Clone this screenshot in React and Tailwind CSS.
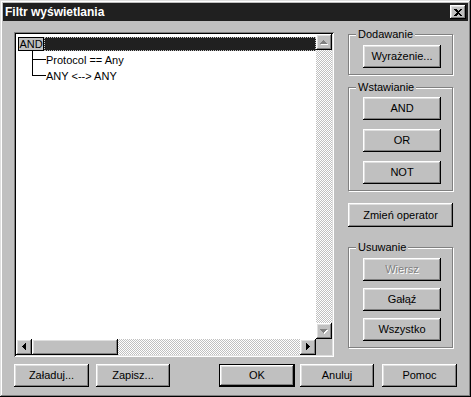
const raised =
  "bg-[#c0c0c0] shadow-[inset_-1px_-1px_#000000,inset_1px_1px_#ffffff,inset_-2px_-2px_#808080,inset_2px_2px_#dfdfdf]";

const dither =
  "bg-[image:repeating-conic-gradient(#c0c0c0_0%_25%,#ffffff_0%_50%)] bg-size-[2px_2px]";

function Button({ children, className = "", disabled = false, isDefault = false }) {
  if (isDefault) {
    return (
      <div className={`border border-black flex ${className}`}>
        <button type="button" className={`${raised} flex-1 flex items-center justify-center leading-none`}>
          {children}
        </button>
      </div>
    );
  }
  return (
    <button
      type="button"
      className={`${raised} flex items-center justify-center leading-none ${
        disabled ? "text-[#808080] [text-shadow:1px_1px_0_#ffffff]" : ""
      } ${className}`}
    >
      {children}
    </button>
  );
}

function Group({ label, className = "", children }) {
  return (
    <div
      className={`relative border border-[#808080] shadow-[1px_1px_0_#ffffff,inset_1px_1px_0_#ffffff] ${className}`}
    >
      <span className="absolute -top-[7px] left-[7px] px-[2px] bg-[#c0c0c0] leading-[13px]">
        {label}
      </span>
      {children}
    </div>
  );
}

function Arrow({ dir, disabled }) {
  const shapes = {
    up: "M3.5 0 L7 4 L0 4 Z",
    down: "M0 0 L7 0 L3.5 4 Z",
    left: "M4 0 L4 7 L0 3.5 Z",
    right: "M0 0 L4 3.5 L0 7 Z",
  };
  const vertical = dir === "up" || dir === "down";
  const w = vertical ? 7 : 4;
  const h = vertical ? 4 : 7;
  return (
    <div className={`${raised} w-[16px] h-[16px] flex items-center justify-center shrink-0`}>
      <svg width={w + 1} height={h + 1} viewBox={`0 0 ${w + 1} ${h + 1}`} shapeRendering="crispEdges">
        {disabled && <path d={shapes[dir]} fill="#ffffff" transform="translate(1 1)" />}
        <path d={shapes[dir]} fill={disabled ? "#808080" : "#000000"} />
      </svg>
    </div>
  );
}

function TreeBox() {
  const children = ["Protocol == Any", "ANY <--> ANY"];
  return (
    <div className="w-[320px] h-[325px] p-[2px] flex shadow-[inset_1px_1px_#808080,inset_-1px_-1px_#ffffff,inset_2px_2px_#000000,inset_-2px_-2px_#dfdfdf]">
      <div className="flex-1 flex flex-col bg-white">
        <div className="flex-1 flex">
          <div className="flex-1 pt-[3px] pl-[2px]">
            <div className="flex h-[14px]">
              <span className="w-[26px] h-[14px] border border-black bg-[#c0c0c0] flex items-center justify-center leading-none">
                AND
              </span>
              <span className="flex-1 bg-[#202020] border border-dotted border-[#c0c0c0]" />
            </div>
            <div className="pl-[14px]">
              {children.map((text, i) => (
                <div key={text} className="flex h-[16px]">
                  <div className="w-[14px] flex flex-col">
                    <div className="h-[9px] border-l border-b border-black" />
                    {i < children.length - 1 && <div className="flex-1 border-l border-black" />}
                  </div>
                  <span className="leading-[16px] pt-[1px]">{text}</span>
                </div>
              ))}
            </div>
          </div>
          <div className="w-[16px] flex flex-col">
            <Arrow dir="up" disabled />
            <div className={`flex-1 ${dither}`} />
            <Arrow dir="down" disabled />
          </div>
        </div>
        <div className="h-[16px] flex">
          <Arrow dir="left" />
          <div className={`w-[86px] ${raised}`} />
          <div className={`flex-1 ${dither}`} />
          <Arrow dir="right" />
          <div className="w-[16px] bg-[#c0c0c0]" />
        </div>
      </div>
    </div>
  );
}

export default function App() {
  return (
    <div className="w-[471px] h-[397px] p-[3px] flex flex-col bg-[#c0c0c0] font-['Liberation_Sans',Arial,sans-serif] text-[11px] text-black shadow-[inset_-1px_-1px_#000000,inset_1px_1px_#dfdfdf,inset_-2px_-2px_#808080,inset_2px_2px_#ffffff]">
      <div className="h-[18px] bg-[#202020] flex items-center justify-between pl-[2px] pr-[2px]">
        <span className="text-white font-bold text-[12px] leading-none">Filtr wyświetlania</span>
        <button type="button" className={`${raised} w-[16px] h-[14px] flex items-center justify-center`}>
          <svg width="8" height="7" viewBox="0 0 8 7" shapeRendering="crispEdges">
            <path d="M0 0 H2 L4 2 L6 0 H8 L5 3.5 L8 7 H6 L4 5 L2 7 H0 L3 3.5 Z" fill="#000000" />
          </svg>
        </button>
      </div>

      <div className="flex pl-[11px] pt-[11px]">
        <TreeBox />
        <div className="ml-[14px] w-[105px] flex flex-col">
          <Group label="Dodawanie" className="mt-[2px] h-[41px] pt-[10px] pl-[14px]">
            <Button className="w-[78px] h-[23px]">Wyrażenie...</Button>
          </Group>
          <Group label="Wstawianie" className="mt-[12px] h-[104px] pt-[9px] pl-[14px] flex flex-col gap-[9px]">
            <Button className="w-[78px] h-[23px]">AND</Button>
            <Button className="w-[78px] h-[23px]">OR</Button>
            <Button className="w-[78px] h-[23px]">NOT</Button>
          </Group>
          <Button className="mt-[12px] w-[105px] h-[24px]">Zmień operator</Button>
          <Group label="Usuwanie" className="mt-[20px] h-[101px] pt-[10px] pl-[14px] flex flex-col gap-[7px]">
            <Button className="w-[78px] h-[23px]" disabled>
              Wiersz
            </Button>
            <Button className="w-[78px] h-[23px]">Gałąź</Button>
            <Button className="w-[78px] h-[23px]">Wszystko</Button>
          </Group>
        </div>
      </div>

      <div className="flex pl-[11px] pt-[7px]">
        <Button className="w-[75px] h-[23px]">Załaduj...</Button>
        <Button className="ml-[7px] w-[74px] h-[23px]">Zapisz...</Button>
        <Button className="ml-[49px] w-[76px] h-[23px]" isDefault>
          OK
        </Button>
        <Button className="ml-[5px] w-[74px] h-[23px]">Anuluj</Button>
        <Button className="ml-[8px] w-[75px] h-[23px]">Pomoc</Button>
      </div>
    </div>
  );
}
